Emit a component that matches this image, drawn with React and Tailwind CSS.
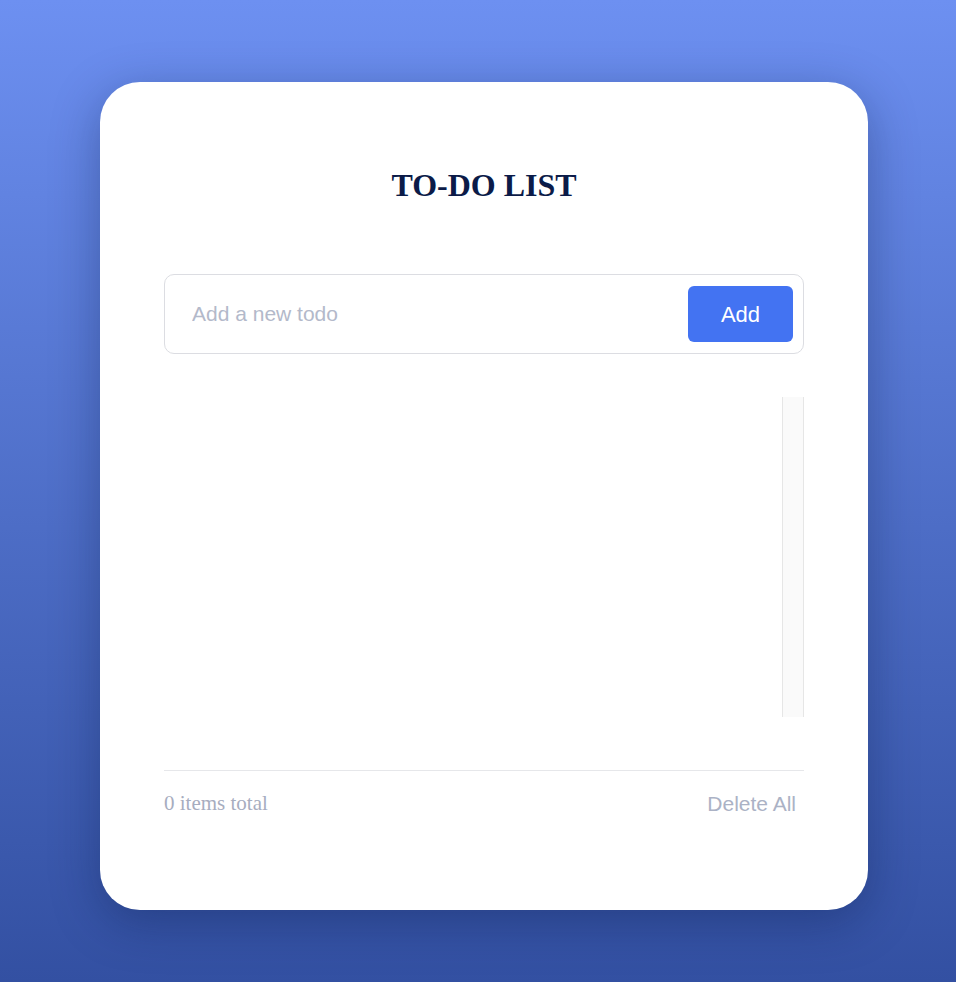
import React, { useState } from "react";

const App = () => {
    const [todos, setTodos] = useState([]);
    const [text, setText] = useState("");

    const addTodo = () => {
        if (!text.trim()) return;
        setTodos((prev) => [...prev, { id: Date.now(), text: text.trim() }]);
        setText("");
    };

    return (
        <div className="min-h-screen bg-gradient-to-b from-[#6d90f1] to-[#3350a2] pt-[82px] pl-[100px]">
            <div className="w-[768px] h-[828px] bg-white rounded-[40px] shadow-[0_12px_48px_rgba(10,25,70,0.35)] px-16 pt-16 flex flex-col">
                <h1
                    className="mt-[21px] mb-[70px] text-center text-[32px] leading-[37px] font-bold text-[#0b1b48]"
                    style={{ fontFamily: '"Liberation Serif", "Times New Roman", serif' }}
                >
                    TO-DO LIST
                </h1>

                {/* input row */}
                <div className="h-[80px] flex items-center border border-[#dcdde2] rounded-[10px] pl-[27px] pr-[10px]">
                    <input
                        type="text"
                        value={text}
                        onChange={(e) => setText(e.target.value)}
                        onKeyDown={(e) => e.key === "Enter" && addTodo()}
                        placeholder="Add a new todo"
                        className="flex-1 outline-none text-[21px] text-[#333] placeholder:text-[#b3b9ca] bg-transparent"
                        style={{ fontFamily: '"Liberation Sans", Arial, sans-serif' }}
                    />
                    <button
                        onClick={addTodo}
                        className="w-[105px] h-[56px] rounded-[6px] bg-[#4373f2] text-white text-[22px]"
                        style={{ fontFamily: '"Liberation Sans", Arial, sans-serif' }}
                    >
                        Add
                    </button>
                </div>

                {/* list */}
                <div className="mt-[43px] h-[320px] flex">
                    <ul className="flex-1">
                        {todos.map((t) => (
                            <li key={t.id} className="py-2 text-[18px] text-[#333]">
                                {t.text}
                            </li>
                        ))}
                    </ul>
                    <div className="w-[22px] h-full bg-[#fafafa] border-l border-r border-[#e6e6e6]" />
                </div>

                {/* footer */}
                <div className="mt-[53px] border-t border-[#e6e7ea] pt-[21px] flex items-center justify-between h-[46px]">
                    <span
                        className="text-[21px] text-[#a7adbf]"
                        style={{ fontFamily: '"Liberation Serif", "Times New Roman", serif' }}
                    >
                        {todos.length} items total
                    </span>
                    <button
                        onClick={() => setTodos([])}
                        className="pr-[8px] text-[21px] text-[#abb2c5]"
                        style={{ fontFamily: '"Liberation Sans", Arial, sans-serif' }}
                    >
                        Delete All
                    </button>
                </div>
            </div>
        </div>
    );
};

export default App;
